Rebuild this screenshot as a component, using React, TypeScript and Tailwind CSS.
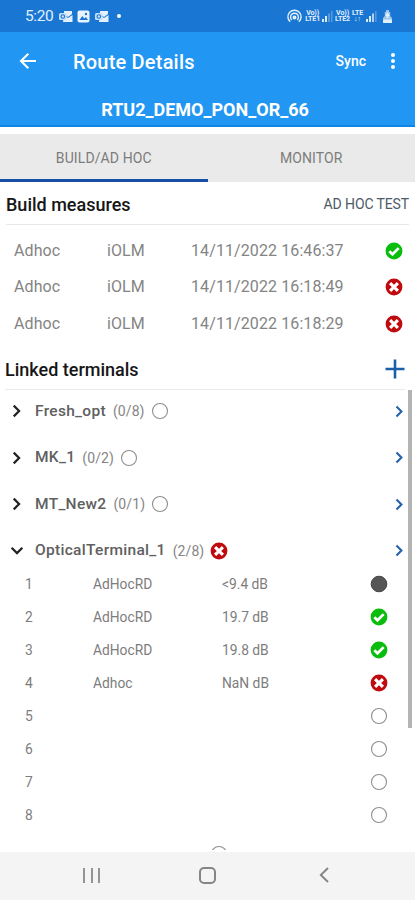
import React from 'react'

type Status = 'ok' | 'fail' | 'none' | 'unknown'

interface Port {
    id: number
    name?: string
    loss?: string
    status: Status
}

const measures: { name: string; type: string; date: string; status: Status }[] = [
    { name: 'Adhoc', type: 'iOLM', date: '14/11/2022 16:46:37', status: 'ok' },
    { name: 'Adhoc', type: 'iOLM', date: '14/11/2022 16:18:49', status: 'fail' },
    { name: 'Adhoc', type: 'iOLM', date: '14/11/2022 16:18:29', status: 'fail' },
]

const terminals: { name: string; count: string; status: Status; open?: boolean }[] = [
    { name: 'Fresh_opt', count: '(0/8)', status: 'none' },
    { name: 'MK_1', count: '(0/2)', status: 'none' },
    { name: 'MT_New2', count: '(0/1)', status: 'none' },
    { name: 'OpticalTerminal_1', count: '(2/8)', status: 'fail', open: true },
]

const ports: Port[] = [
    { id: 1, name: 'AdHocRD', loss: '<9.4 dB', status: 'unknown' },
    { id: 2, name: 'AdHocRD', loss: '19.7 dB', status: 'ok' },
    { id: 3, name: 'AdHocRD', loss: '19.8 dB', status: 'ok' },
    { id: 4, name: 'Adhoc', loss: 'NaN dB', status: 'fail' },
    { id: 5, status: 'none' },
    { id: 6, status: 'none' },
    { id: 7, status: 'none' },
    { id: 8, status: 'none' },
]

function StatusIcon({ status }: { status: Status }) {
    return (
        <svg className="block size-[18px] shrink-0" viewBox="0 0 18 18" fill="none">
            {status === 'ok' && (
                <>
                    <circle cx="9" cy="9" r="8.4" fill="#08bd0c" />
                    <path d="M4.3 9.2l3.2 3.1 6.2-6.2" stroke="#fff" strokeWidth="2.7" />
                </>
            )}
            {status === 'fail' && (
                <>
                    <circle cx="9" cy="9" r="8.4" fill="#c00a0e" />
                    <path d="M5.1 5.1l7.8 7.8M12.9 5.1l-7.8 7.8" stroke="#fff" strokeWidth="3.1" />
                </>
            )}
            {status === 'unknown' && <circle cx="9" cy="9" r="7.8" fill="#565656" stroke="#444" />}
            {status === 'none' && <circle cx="9" cy="9" r="7.5" stroke="#8e8e8e" strokeWidth="1.1" />}
        </svg>
    )
}

function Chevron({ className }: { className: string }) {
    return (
        <svg className={className} viewBox="0 0 12 12" fill="none" stroke="currentColor" strokeWidth="1.9">
            <path d="M3.2 1.400L7.800 6l-4.600 4.600" />
        </svg>
    )
}

function MailIcon() {
    return (
        <svg className="h-[13px] w-[14px]" viewBox="0 0 14 13">
            <path d="M5 1h8v3l-4 3-4-3z" fill="#e3f0fd" />
            <path d="M5 5l4 3 4.5-3v7H4z" fill="#e3f0fd" />
            <rect x="0" y="3" width="7.5" height="7" rx="1.5" fill="#c6dff8" />
            <circle cx="3.8" cy="6.5" r="1.8" fill="none" stroke="#1976d2" strokeWidth="1.1" />
        </svg>
    )
}

function Signal({ dim }: { dim?: boolean }) {
    return (
        <svg className="h-[12px] w-[11px]" viewBox="0 0 11 12" fill="#d9eafb">
            <rect x="0" y="9" width="2" height="3" />
            <rect x="3" y="6" width="2" height="6" />
            <rect x="6" y="3.5" width="2" height="8.5" opacity={dim ? 0.3 : 0.8} />
            <rect x="9" y="1" width="1.6" height="11" opacity="0.3" />
        </svg>
    )
}

function Carrier({ top, bottom }: { top: string; bottom: string }) {
    return (
        <div className="flex flex-col items-center text-[7px] font-bold leading-[6.5px] tracking-[-0.1px]">
            <span>{top}</span>
            <span>{bottom}</span>
        </div>
    )
}

function StatusBar() {
    return (
        <div className="flex h-8 items-center bg-[#1976d2] pl-[25px] pr-[23px] text-[#e3f0fd]">
            <span className="w-[33.500px] text-[15.5px] leading-8 tracking-[-0.4px]">5:20</span>
            <div className="flex items-center gap-[4.5px]">
                <MailIcon />
                <svg className="h-[13px] w-[13px]" viewBox="0 0 13 13">
                    <rect x="0.5" y="0.5" width="12" height="12" rx="2" fill="#e9f3fd" />
                    <path d="M2.5 10l2.8-4 2 2.4L9 7l2 3z" fill="#1976d2" />
                    <circle cx="9" cy="4" r="1.2" fill="#1976d2" />
                </svg>
                <MailIcon />
                <span className="ml-[4px] size-1 rounded-full bg-white" />
            </div>
            <div className="ml-auto flex items-center">
                <svg className="mr-[3px] h-[15px] w-[15px]" viewBox="0 0 15 15" fill="none" stroke="#e3f0fd" strokeWidth="1.4">
                    <path d="M3.2 12.8a6.6 6.6 0 1 1 8.6 0" />
                    <path d="M4.800 10.900a3.9 3.9 0 1 1 5.400 0" />
                    <circle cx="7.5" cy="8.500" r="1.300" fill="#e3f0fd" />
                </svg>
                <Carrier top="Vo))" bottom="LTE1" />
                <span className="ml-[2px] mr-[2px]"><Signal dim /></span>
                <Carrier top="Vo))" bottom="LTE2" />
                <span className="ml-[2px] mr-[3px]"><Carrier top="LTE" bottom="↓↑" /></span>
                <Signal />
                <svg className="ml-[6px] h-[13px] w-[9px]" viewBox="0 0 9 13" fill="#e3f0fd">
                    <path d="M3 0h3v2h1.2v4L9 8v5H0V8l1.8-2V2H3z" opacity="0.65" />
                    <path d="M4.5 2l2.3 4H5.4v2H3.6V6H2.2z" />
                    <rect x="0" y="9.5" width="9" height="3.5" rx="1" />
                </svg>
            </div>
        </div>
    )
}

export default function App() {
    return (
        <div className="flex h-[900px] w-[415px] flex-col overflow-hidden bg-white font-['Roboto',sans-serif]">
            <StatusBar />

            {/* App bar */}
            <header className="h-[95px] shrink-0 border-b-2 border-[#0f86e3] bg-[#2196f3] text-white">
                <div className="flex h-[58px] items-center pl-[19px] pr-[19px]">
                    <svg className="h-[18px] w-[18px]" viewBox="0 0 18 18" fill="none" stroke="#fff" strokeWidth="2.1">
                        <path d="M17 9H2.5M9.3 1.8L2 9l7.3 7.2" />
                    </svg>
                    <h1 className="ml-[36px] pt-px text-[20px] font-medium leading-6 tracking-[0.2px]">Route Details</h1>
                    <span className="ml-auto text-[14px] font-medium leading-5">Sync</span>
                    <div className="ml-[24px] flex w-[6px] flex-col items-center gap-[1.500px]">
                        <span className="size-[4.5px] rounded-full bg-white" />
                        <span className="size-[4.5px] rounded-full bg-white" />
                        <span className="size-[4.5px] rounded-full bg-white" />
                    </div>
                </div>
                <div className="-ml-[5px] pt-[8px] text-center text-[18px] font-bold leading-6">RTU2_DEMO_PON_OR_66</div>
            </header>

            {/* Tabs */}
            <nav className="mt-[7px] grid h-[48px] shrink-0 grid-cols-2 bg-[#eaeaea] text-center text-[14px] text-[#7c7c7c]">
                <div className="h-[48px] border-b-[3px] border-[#174ea6] leading-[49px] tracking-[0.1px]">BUILD/AD HOC</div>
                <div className="leading-[49px] tracking-[0.1px]">MONITOR</div>
            </nav>

            {/* Build measures */}
            <section className="h-[170px] shrink-0">
                <div className="ml-[6px] mr-[6px] flex h-[43px] items-center justify-between border-b border-[#e8e8e8] pt-[2px]">
                    <h2 className="text-[18px] font-medium text-[#161616]">Build measures</h2>
                    <span className="text-[14px] tracking-[-0.12px] text-[#4d5a66]">AD HOC TEST</span>
                </div>
                <div className="pt-[7.500px]">
                    {measures.map((m) => (
                        <div key={m.date} className="flex h-[36.5px] items-center pl-[14px] pr-[12px] text-[16px] tracking-[0.1px] text-[#848484]">
                            <span className="w-[93px]">{m.name}</span>
                            <span className="w-[84px]">{m.type}</span>
                            <span className="flex-1">{m.date}</span>
                            <StatusIcon status={m.status} />
                        </div>
                    ))}
                </div>
            </section>

            {/* Linked terminals */}
            <div className="ml-[5px] mr-[10px] flex h-[38px] shrink-0 items-center justify-between border-b-[1.5px] border-[#ebebeb] pb-[3px]">
                <h2 className="text-[18px] font-medium text-[#161616]">Linked terminals</h2>
                <svg className="size-[20px]" viewBox="0 0 20 20" stroke="#1b5fa9" strokeWidth="2.6">
                    <path d="M10 0.5v19M0.5 10h19" />
                </svg>
            </div>
            <section className="relative h-[460px] shrink-0 overflow-hidden">
                <div className="flex flex-col gap-[6.5px] pt-px">
                    {terminals.map((t) => (
                        <div key={t.name} className="flex h-[40px] items-center pl-[10px] pr-[9px] text-[#858585]">
                            <Chevron className={t.open ? 'size-[14px] rotate-90 text-[#222]' : 'size-[14px] text-[#222]'} />
                            <span className="ml-[11px] pt-px text-[15.5px] font-medium tracking-[0.3px] text-[#606060]">{t.name}</span>
                            <span className="ml-[7px] mr-[6px] pt-px text-[14px] tracking-[0.1px]">{t.count}</span>
                            <StatusIcon status={t.status} />
                            <Chevron className="ml-auto size-[13px] text-[#2361ae]" />
                        </div>
                    ))}
                </div>
                <div className="-mt-[3px]">
                    {ports.map((p) => (
                        <div key={p.id} className="flex h-[33px] items-center pl-[25px] pr-[27px] text-[13.8px] text-[#7d7d7d]">
                            <span className="w-[68px] pt-px">{p.id}</span>
                            <span className="w-[129px] pt-px">{p.name}</span>
                            <span className="flex-1 pt-px">{p.loss}</span>
                            <StatusIcon status={p.status} />
                        </div>
                    ))}
                </div>
                <div className="pl-[210px] pt-[13px]">
                    <StatusIcon status="none" />
                </div>
                <div className="absolute right-[3px] top-0 h-[338px] w-[4px] bg-[#b4b4b4]" />
            </section>

            {/* System navigation */}
            <footer className="mt-auto flex h-[48px] shrink-0 items-center bg-[#f4f4f4] pb-[2px] pl-[83px] pr-[86px]">
                <div className="flex w-[17px] justify-between">
                    <span className="h-[15px] w-[2px] bg-[#949494]" />
                    <span className="h-[15px] w-[2px] bg-[#949494]" />
                    <span className="h-[15px] w-[2px] bg-[#949494]" />
                </div>
                <span className="ml-[99px] size-[17px] rounded-[5px] border-2 border-[#858585]" />
                <svg className="ml-auto h-[16px] w-[10px]" viewBox="0 0 10 16" fill="none" stroke="#858585" strokeWidth="1.9">
                    <path d="M9 1L1.8 8 9 15" />
                </svg>
            </footer>
        </div>
    )
}
